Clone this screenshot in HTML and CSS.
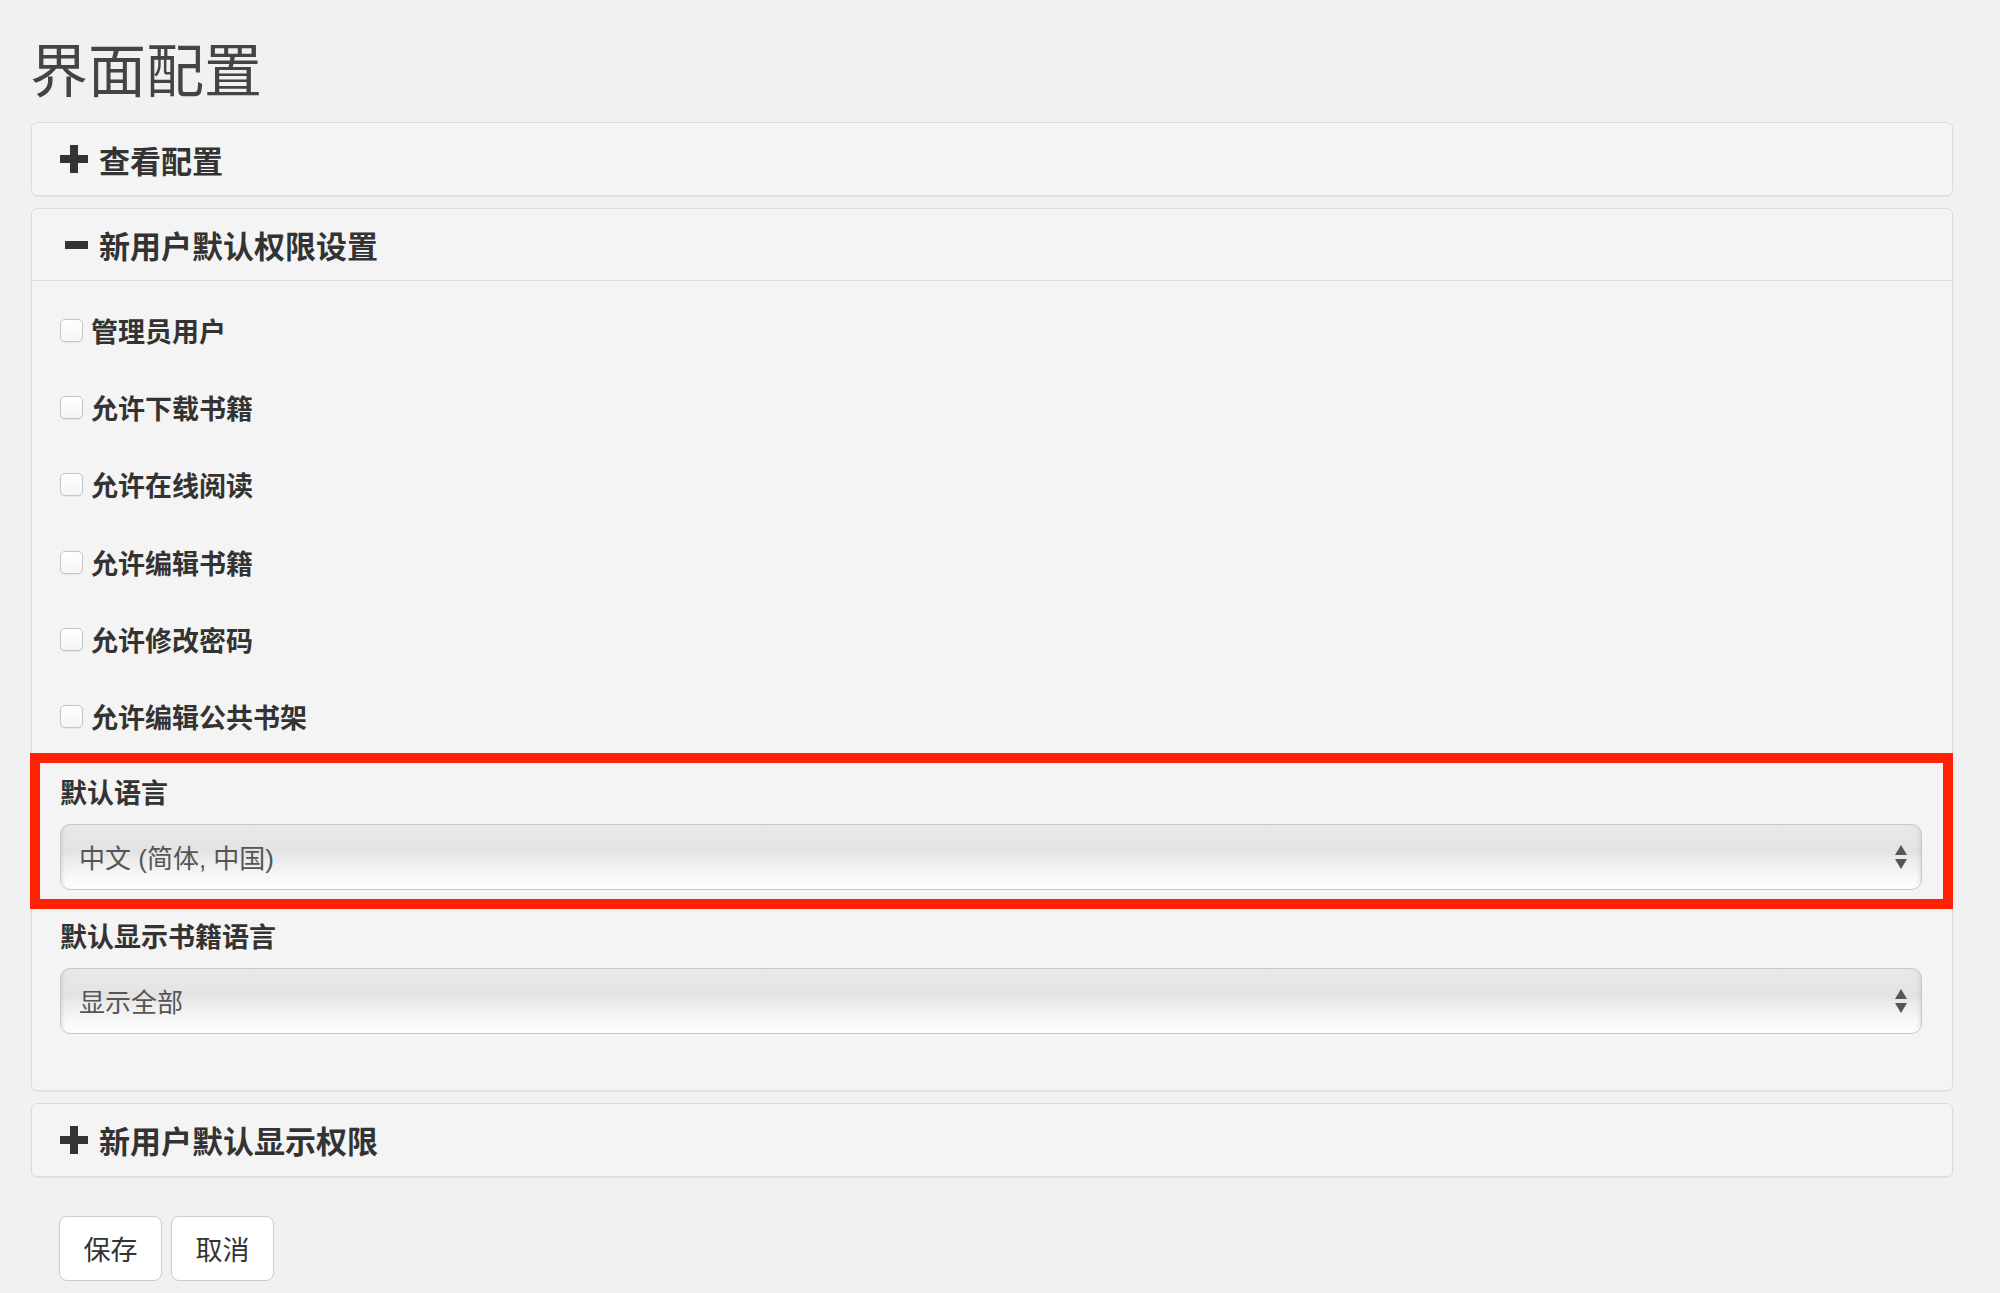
FILE: index.html
```html
<!DOCTYPE html>
<html lang="zh-CN">
<head>
  <meta charset="UTF-8">
  <title>界面配置</title>
  <link rel="stylesheet" href="styles.css">
</head>
<body>
  <div class="page">
    <h1 class="page-title">界面配置</h1>

    <div class="panel">
      <div class="panel-heading">
        <svg class="toggle-icon" width="28" height="28" viewBox="0 0 28 28"><path d="M10 0h8v10h10v8H18v10h-8V18H0v-8h10z" fill="#333"/></svg>
        <span>查看配置</span>
      </div>
    </div>

    <div class="panel">
      <div class="panel-heading open">
        <svg class="toggle-icon" width="28" height="28" viewBox="0 0 28 28"><rect x="5" y="10" width="23" height="8" fill="#333"/></svg>
        <span>新用户默认权限设置</span>
      </div>
      <div class="panel-body">
        <div class="checks">
          <label class="check-row"><span class="checkbox"></span>管理员用户</label>
          <label class="check-row"><span class="checkbox"></span>允许下载书籍</label>
          <label class="check-row"><span class="checkbox"></span>允许在线阅读</label>
          <label class="check-row"><span class="checkbox"></span>允许编辑书籍</label>
          <label class="check-row"><span class="checkbox"></span>允许修改密码</label>
          <label class="check-row"><span class="checkbox"></span>允许编辑公共书架</label>
        </div>

        <div class="highlight">
          <div class="field-label">默认语言</div>
          <div class="select">
            <span>中文 (简体, 中国)</span>
            <svg class="select-arrow" width="12" height="24" viewBox="0 0 12 24"><path d="M6 0L12 10H0z M0 14h12L6 24z" fill="#555"/></svg>
          </div>
        </div>

        <div class="field">
          <div class="field-label">默认显示书籍语言</div>
          <div class="select">
            <span>显示全部</span>
            <svg class="select-arrow" width="12" height="24" viewBox="0 0 12 24"><path d="M6 0L12 10H0z M0 14h12L6 24z" fill="#555"/></svg>
          </div>
        </div>
      </div>
    </div>

    <div class="panel">
      <div class="panel-heading">
        <svg class="toggle-icon" width="28" height="28" viewBox="0 0 28 28"><path d="M10 0h8v10h10v8H18v10h-8V18H0v-8h10z" fill="#333"/></svg>
        <span>新用户默认显示权限</span>
      </div>
    </div>

    <div class="actions">
      <button class="btn">保存</button>
      <button class="btn">取消</button>
    </div>
  </div>
</body>
</html>
```

FILE: styles.css
```css
html, body {
  margin: 0;
  padding: 0;
  background-color: #f1f1f1;
}
* {
  box-sizing: border-box;
}
body {
  font-family: "Liberation Sans", "Noto Sans CJK SC", sans-serif;
  color: #333;
}
.page {
  padding: 37px 47px 0 31px;
}
.page-title {
  font-size: 58px;
  line-height: 70px;
  font-weight: 400;
  color: #444;
  margin: 0 0 15px -1px;
}
.panel {
  background-color: #f4f4f4;
  border: 1px solid #dcdcdc;
  border-radius: 6px;
  box-shadow: 0 1px 1px rgba(0, 0, 0, 0.05);
  margin-bottom: 12px;
}
.panel-heading {
  height: 72px;
  padding: 0 28px;
  display: flex;
  align-items: center;
  font-size: 31px;
  font-weight: 700;
  color: #333;
}
.panel-heading.open {
  border-bottom: 1px solid #dcdcdc;
}
.toggle-icon {
  flex-shrink: 0;
  margin-right: 11px;
}
.panel-body {
  padding: 13px 30px 56px 28px;
}
.checks {
  display: flex;
  flex-direction: column;
  gap: 5.4px;
}
.check-row {
  height: 72px;
  display: flex;
  align-items: center;
  font-size: 27px;
  font-weight: 700;
  color: #333;
}
.checkbox {
  width: 23px;
  height: 23px;
  border: 1px solid #c4c4c4;
  border-radius: 5px;
  background: linear-gradient(#ffffff, #f5f5f5);
  box-shadow: 0 1px 1px rgba(0, 0, 0, 0.06);
  margin-right: 8px;
  flex-shrink: 0;
}
/* Marcação vermelha em volta do idioma */
.highlight {
  border: 10px solid #ff2200;
  margin: 0 -31px 0 -30px;
  padding: 13px 21px 9px 20px;
}
.field {
  margin-top: 11px;
}
.field-label {
  font-size: 27px;
  font-weight: 700;
  line-height: 36px;
  color: #333;
  margin-bottom: 12px;
}
.select {
  height: 66px;
  border: 1px solid #c8c8c8;
  border-radius: 10px;
  padding: 0 14px 0 18px;
  display: flex;
  align-items: center;
  justify-content: space-between;
  font-size: 26px;
  color: #555;
  background: linear-gradient(#e9e9e9 0%, #e3e3e3 42%, #ececec 55%, #f7f7f7 78%, #fdfdfd 100%);
  box-shadow: inset 4px 0 4px -3px rgba(0, 0, 0, 0.12), inset -4px 0 4px -3px rgba(0, 0, 0, 0.12), inset 0 -2px 1px rgba(255, 255, 255, 0.9);
}
.select-arrow {
  flex-shrink: 0;
}
.actions {
  padding: 27px 0 14px 28px;
  display: flex;
  gap: 9px;
}
.btn {
  width: 103px;
  height: 65px;
  border: 1px solid #cccccc;
  border-radius: 8px;
  background-color: #fff;
  font-family: "Liberation Sans", "Noto Sans CJK SC", sans-serif;
  font-size: 27px;
  color: #333;
  padding: 0;
}
```
